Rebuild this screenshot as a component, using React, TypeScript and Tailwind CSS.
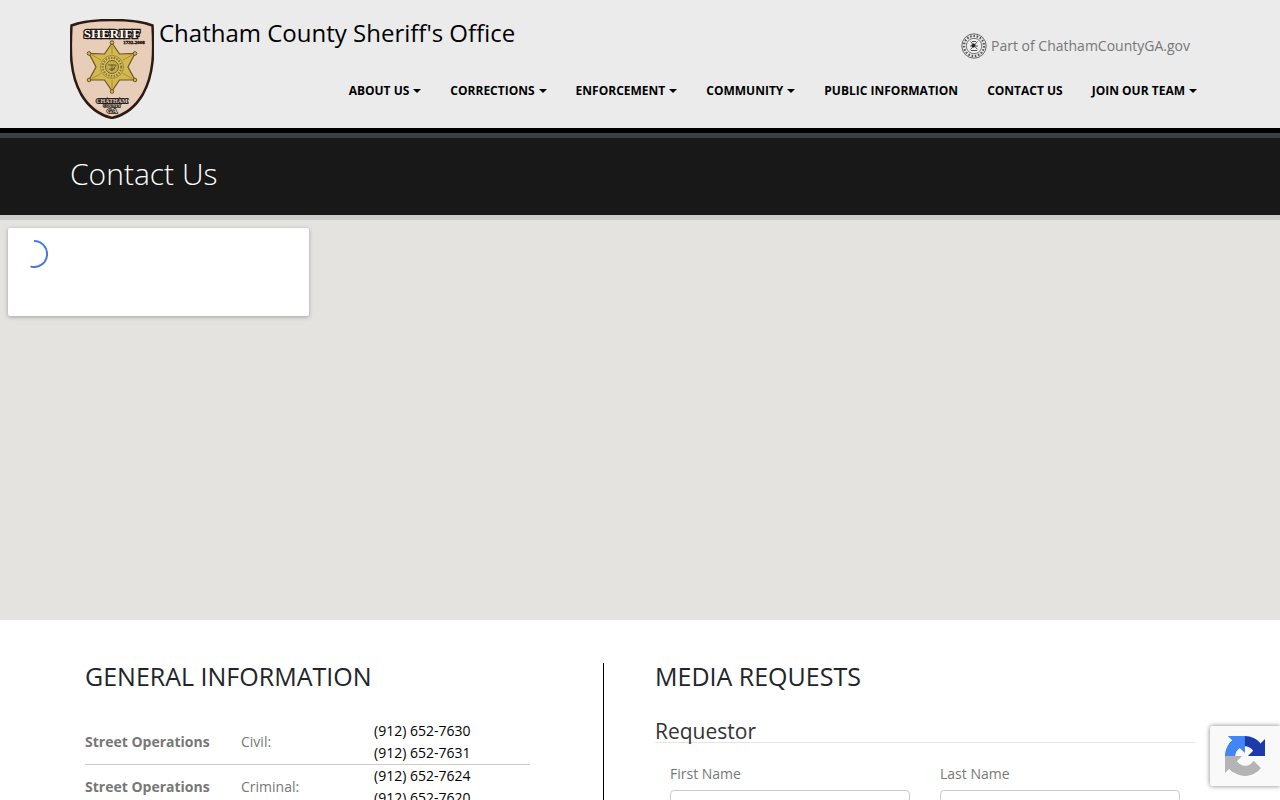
import { useId } from "react";

const nav = [
  { label: "About Us", menu: true },
  { label: "Corrections", menu: true },
  { label: "Enforcement", menu: true },
  { label: "Community", menu: true },
  { label: "Public Information" },
  { label: "Contact Us" },
  { label: "Join Our Team", menu: true },
];

const phones = [
  { unit: "Street Operations", desk: "Civil:", numbers: ["(912) 652-7630", "(912) 652-7631"] },
  { unit: "Street Operations", desk: "Criminal:", numbers: ["(912) 652-7624", "(912) 652-7620"] },
];

// six-pointed star, centred on 42,48
const starPoints =
  "42,24 49.5,35 65,34.5 58,48 65,61 49.5,61 42,72 34.5,61 19,61 26,48 19,34.5 34.5,35";
const starTips = [
  [42, 23.5],
  [65, 34.5],
  [65, 61],
  [42, 72.5],
  [19, 61],
  [19, 34.5],
];

function ShieldLogo() {
  return (
    <svg viewBox="0 0 84 100" className="h-[100px] w-[84px] shrink-0" role="img" aria-label="Sheriff badge">
      <path
        d="M1.500 6.500C12 2.500 27 1 42 1s30 1.500 40.500 5.500C84 33 84 55 73 75 66 87 55 96 42 99 29 96 18 87 11 75 0 55 0 33 1.500 6.500Z"
        fill="#e8ceb8"
        stroke="#2d1b13"
        strokeWidth="2.500"
      />
      <g fontFamily="Liberation Serif, serif" fontWeight="700" textAnchor="middle">
        <text x="42" y="19" fontSize="13" fill="#fff" stroke="#1d1410" strokeWidth="2.500" paintOrder="stroke">
          SHERIFF
        </text>
        <text x="64" y="25" fontSize="5" fill="#2d1b13" stroke="#2d1b13" strokeWidth=".4">
          1732-2008
        </text>
      </g>
      <polygon points={starPoints} fill="#d3b84f" stroke="#695620" strokeWidth="1.200" />
      <path
        d="M42 27v8M62 36l-9 5M62 59.500l-9-5M42 69v-8M22 59.500l9-5M22 36l9 5"
        stroke="#9c8436"
        strokeWidth=".8"
      />
      {starTips.map(([x, y]) => (
        <circle key={`${x}-${y}`} cx={x} cy={y} r="1.800" fill="#d3b84f" stroke="#695620" />
      ))}
      <circle cx="42" cy="48" r="11.500" fill="#d8c25f" stroke="#8b7730" strokeWidth=".8" />
      <circle cx="42" cy="48" r="9.200" fill="none" stroke="#8b7436" strokeWidth="2.200" strokeDasharray="1.600 1.200" />
      <circle cx="42" cy="48" r="6.500" fill="#c7ad4c" stroke="#6e5b27" />
      <path d="M38 46h8l-3 5h-3M39 50h6M42 45v7" fill="none" stroke="#6e5b27" />
      <g
        fontFamily="Liberation Serif, serif"
        fontWeight="700"
        textAnchor="middle"
        fill="#e8ceb8"
        stroke="#222"
        paintOrder="stroke"
      >
        <text x="42" y="84" fontSize="6" strokeWidth="2">
          CHATHAM
        </text>
        <text x="42" y="88" fontSize="4" strokeWidth="1.500">
          COUNTY
        </text>
        <text x="42" y="94" fontSize="7" strokeWidth="1.500">
          GA
        </text>
      </g>
    </svg>
  );
}

function CountySeal() {
  return (
    <svg viewBox="0 0 26 26" className="size-[26px]" fill="none" stroke="#555" aria-hidden="true">
      <circle cx="13" cy="13" r="12.200" strokeWidth=".9" />
      <circle cx="13" cy="13" r="10" strokeWidth="2.200" strokeDasharray="1.600 1.700" />
      <circle cx="13" cy="13" r="7.700" fill="#f0f0f0" strokeWidth=".8" />
      <path d="M9.500 8.500l7 8M16.500 8.500l-7 8M10 17.500h6M11 8.500h4M10 12v2M16 12v2" />
      <circle cx="12.500" cy="12.500" r="1.600" fill="#222" stroke="#222" />
    </svg>
  );
}

function RecaptchaLogo() {
  return (
    <svg viewBox="0 0 64 64" className="size-10" role="img" aria-label="reCAPTCHA">
      <path
        fill="#1c3aa9"
        d="M64 31.955l-.033-1.370V4.687l-7.160 7.160C50.948 4.674 42.033.093 32.050.093c-10.400 0-19.622 4.960-25.458 12.640l11.736 11.860a15.550 15.550 0 0 1 4.754-5.334c2.050-1.600 4.952-2.906 8.968-2.906.485 0 .86.057 1.135.163 4.976.393 9.288 3.140 11.828 7.124l-8.307 8.307L64 31.953"
      />
      <path
        fill="#4285f4"
        d="M31.862.094l-1.370.033H4.594l7.160 7.160C4.580 13.147 0 22.060 0 32.046c0 10.400 4.960 19.622 12.640 25.458L24.500 45.768a15.550 15.550 0 0 1-5.334-4.754c-1.600-2.050-2.906-4.952-2.906-8.968 0-.485.057-.86.163-1.135.393-4.976 3.140-9.288 7.124-11.828l8.307 8.307L31.860.095"
      />
      <path
        fill="#b4b4b4"
        d="M.001 32.045l.033 1.370v25.898l7.160-7.160c5.860 7.173 14.774 11.754 24.760 11.754 10.400 0 19.622-4.960 25.458-12.640l-11.736-11.860a15.550 15.550 0 0 1-4.754 5.334c-2.050 1.600-4.952 2.906-8.968 2.906-.485 0-.86-.057-1.135-.163-4.976-.393-9.288-3.140-11.828-7.124l8.307-8.307c-10.522.04-22.400.066-27.295-.005"
      />
    </svg>
  );
}

function Header() {
  return (
    <header className="border-b-[5px] border-black bg-[#ebebeb]">
      <div className="mx-auto flex h-32 max-w-[1140px] items-start gap-[5px] pt-[19px]">
        <a href="#home">
          <ShieldLogo />
        </a>
        <div className="flex grow flex-col gap-[22px]">
          <div className="flex items-start justify-between pr-5">
            <a href="#home" className="text-2xl leading-[27px] text-black">
              Chatham County Sheriff's Office
            </a>
            <a href="#county" className="mt-[14px] flex items-center gap-1 text-sm leading-[22px] text-[#777]">
              <CountySeal />
              Part of ChathamCountyGA.gov
            </a>
          </div>
          <nav className="flex justify-end gap-[29px] pr-[13px] text-xs leading-5 font-bold text-black uppercase">
            {nav.map((item) => (
              <a key={item.label} href="#nav" className="flex items-center gap-1">
                {item.label}
                {item.menu && (
                  <svg viewBox="0 0 8 4" className="h-1 w-2" aria-hidden="true">
                    <path d="M0 0h8L4 4z" />
                  </svg>
                )}
              </a>
            ))}
          </nav>
        </div>
      </div>
    </header>
  );
}

function MapPanel() {
  return (
    <section className="h-[400px] bg-[#e5e3df] p-2" aria-label="Map">
      <div className="h-[88px] w-[301px] rounded-xs bg-white p-3 shadow-[0_1px_4px_rgba(0,0,0,0.3)]">
        <svg viewBox="0 0 28 28" className="size-7" fill="none" aria-hidden="true">
          <path d="M14 1a13 13 0 1 1-3.500 25.500" stroke="#4a78dc" strokeWidth="2" />
        </svg>
      </div>
    </section>
  );
}

function GeneralInfo() {
  return (
    <section className="w-[519px] border-r border-black">
      <h2 className="text-[25px] leading-[26px] text-[#212529] uppercase">General Information</h2>
      <table className="mt-[31px] w-[445px] text-sm leading-[22px]">
        <tbody>
          {phones.map((row) => (
            <tr key={row.desk} className="border-b border-[#ccc]">
              <th scope="row" className="w-[156px] text-left font-bold text-[#777]">
                {row.unit}
              </th>
              <td className="w-[133px] text-[#777]">{row.desk}</td>
              <td className="text-black">
                {row.numbers.map((n) => (
                  <a key={n} href={`tel:${n}`} className="block">
                    {n}
                  </a>
                ))}
              </td>
            </tr>
          ))}
        </tbody>
      </table>
    </section>
  );
}

function Field({ label }: { label: string }) {
  const id = useId();
  return (
    <div className="flex flex-1 flex-col gap-[5px]">
      <label htmlFor={id} className="text-sm leading-[22px] text-[#777]">
        {label}
      </label>
      <input id={id} type="text" className="h-[34px] rounded border border-[#ccc] bg-white px-3 text-sm" />
    </div>
  );
}

function MediaRequests() {
  return (
    <section className="w-[540px]">
      <h2 className="text-[25px] leading-[26px] text-[#212529] uppercase">Media Requests</h2>
      <form>
        <h3 className="mt-[31px] border-b border-[#e5e5e5] text-[21px] leading-[22px] text-[#333]">Requestor</h3>
        <div className="mt-5 flex gap-[30px] px-[15px]">
          <Field label="First Name" />
          <Field label="Last Name" />
        </div>
      </form>
    </section>
  );
}

export default function App() {
  return (
    <div className="min-h-screen bg-white font-['Open_Sans',sans-serif]">
      <Header />
      <div className="border-t-[5px] border-b-[5px] border-t-[#384045] border-b-[#ccc] bg-[#181818]">
        <div className="mx-auto max-w-[1140px] pt-[15px] pb-5">
          <h1 className="text-[30px] leading-[42px] font-light text-white">Contact Us</h1>
        </div>
      </div>
      <MapPanel />
      <main className="mx-auto flex max-w-[1140px] justify-between px-[15px] pt-[43px]">
        <GeneralInfo />
        <MediaRequests />
      </main>
      {/* badge pinned to the window's edge */}
      <div className="fixed right-0 bottom-[14px] flex h-[60px] w-[70px] items-center justify-center rounded-l-xs bg-[#f9f9f9] shadow-[0_0_5px_gray]">
        <RecaptchaLogo />
      </div>
    </div>
  );
}
